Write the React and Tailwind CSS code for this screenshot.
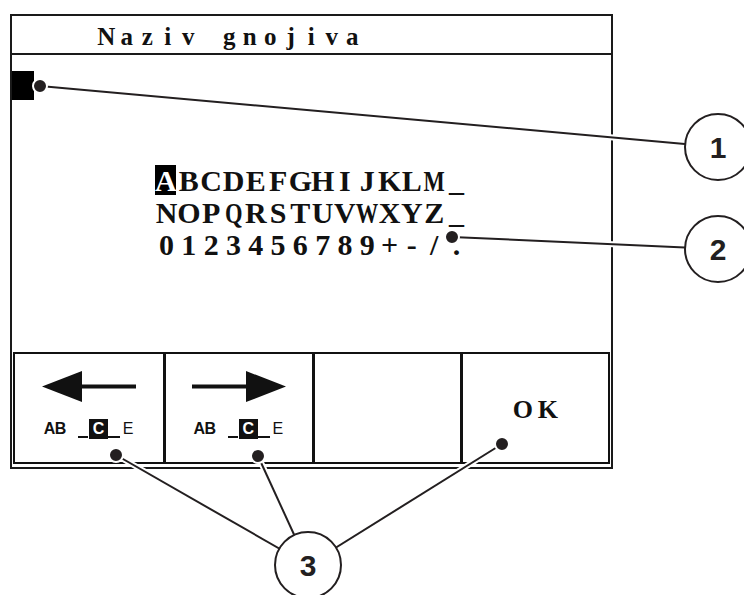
import React from 'react';

const serif = "font-['Liberation_Serif','DejaVu_Serif',serif]";
const sans = "font-['Liberation_Sans',Arial,sans-serif]";

const WIDE = 'MWQ';

// fixed-pitch row of characters, like the terminal's bitmap font
const Cells = ({ text, w }) => (
  <>
    {text.split('').map((ch, i) => (
      <span key={i} className={`inline-flex justify-center ${w}`}>
        {WIDE.includes(ch) ? <span className="inline-block scale-x-75">{ch}</span> : ch}
      </span>
    ))}
  </>
);

const ArrowLeft = () => (
  <svg width="94" height="31" viewBox="0 0 94 31">
    <polygon points="0,15.5 40,0 40,31" fill="#111" />
    <rect x="38" y="13.5" width="56" height="4" fill="#111" />
  </svg>
);

const ArrowRight = () => (
  <svg width="94" height="31" viewBox="0 0 94 31">
    <rect x="0" y="13.5" width="56" height="4" fill="#111" />
    <polygon points="94,15.5 54,0 54,31" fill="#111" />
  </svg>
);

const CursorLabel = () => (
  <div className={`${sans} flex items-end text-[16px] leading-[20px] text-[#111] h-[20px]`}>
    <span className="w-[11px] flex justify-center font-bold">A</span>
    <span className="w-[11px] flex justify-center font-bold">B</span>
    <span className="w-[10px] h-[2px] bg-[#111] ml-[12px] mb-[1px]" />
    <span className="w-[19px] h-[20px] flex justify-center bg-[#111] text-white font-bold ml-[1px]">C</span>
    <span className="w-[12px] h-[2px] bg-[#111] mb-[1px]" />
    <span className="w-[12px] flex justify-center ml-[2px]">E</span>
  </div>
);

// callout circle with number
const Callout = ({ n, className }) => (
  <div
    className={`absolute w-[68px] h-[68px] rounded-full border-2 border-[#231f20] bg-white flex items-center justify-center ${sans} font-bold text-[30px] text-[#231f20] ${className}`}
  >
    {n}
  </div>
);

const Leader = ({ x1, y1, x2, y2 }) => (
  <g>
    <line x1={x1} y1={y1} x2={x2} y2={y2} stroke="#fff" strokeWidth="6" />
    <line x1={x1} y1={y1} x2={x2} y2={y2} stroke="#231f20" strokeWidth="2" />
  </g>
);

const Dot = ({ cx, cy }) => (
  <circle cx={cx} cy={cy} r="7" fill="#231f20" stroke="#fff" strokeWidth="2" />
);

export default function App() {
  return (
    <div className="relative w-[744px] h-[595px] overflow-hidden bg-white">
      {/* display frame */}
      <div className="ml-[10px] mt-[14px] w-[603px] h-[455px] border-2 border-[#1a1a1a] flex flex-col">
        <div className={`h-[39px] border-b-2 border-[#1a1a1a] pl-[84px] pt-[4px] ${serif} font-bold text-[25px] leading-[33px] text-[#111] whitespace-pre`}>
          <Cells text="Naziv gnojiva" w="w-[20.5px]" />
        </div>

        <div className="flex-1 flex flex-col">
          <div className="mt-[16px] w-[22px] h-[29px] bg-black" />
          <div className={`${serif} font-bold text-[30px] leading-[32px] text-[#111] mt-[65px] mx-auto w-fit whitespace-pre`}>
            <div className="flex h-[32px]">
              <span className="inline-flex justify-center items-center w-[21px] mr-[1.3px] h-[30px] bg-black text-white">
                <span className="translate-y-[1px]">A</span>
              </span>
              <Cells text="BCDEFGHIJKLM_" w="w-[22.3px]" />
            </div>
            <div className="flex h-[32px]">
              <Cells text="NOPQRSTUVWXYZ_" w="w-[22.3px]" />
            </div>
            <div className="flex h-[32px]">
              <Cells text="0123456789+-/." w="w-[22.3px]" />
            </div>
          </div>
        </div>

        {/* softkeys */}
        <div className="mx-[1px] mb-[3px] h-[112px] border-2 border-[#111] grid grid-cols-4">
          <div className="flex flex-col items-center pt-[17px] gap-[17px]">
            <ArrowLeft />
            <CursorLabel />
          </div>
          <div className="border-l-[3px] border-[#111] flex flex-col items-center pt-[17px] gap-[17px]">
            <ArrowRight />
            <CursorLabel />
          </div>
          <div className="border-l-[3px] border-[#111]" />
          <div className={`border-l-[3px] border-[#111] flex items-center justify-center pt-[3px] ${serif} font-bold text-[26px] text-[#111]`}>
            <Cells text="OK" w="w-[25px]" />
          </div>
        </div>
      </div>

      {/* annotation leaders */}
      <svg className="absolute inset-0" width="744" height="595">
        <Leader x1={40} y1={86} x2={718} y2={147} />
        <Leader x1={452} y1={237} x2={718} y2={249} />
        <Leader x1={116} y1={455} x2={308} y2={565} />
        <Leader x1={258} y1={456} x2={308} y2={565} />
        <Leader x1={502} y1={444} x2={308} y2={565} />
        <Dot cx={40} cy={86} />
        <Dot cx={452} cy={237} />
        <Dot cx={116} cy={455} />
        <Dot cx={258} cy={456} />
        <Dot cx={502} cy={444} />
      </svg>

      <Callout n="1" className="left-[684px] top-[113px]" />
      <Callout n="2" className="left-[684px] top-[215px]" />
      <Callout n="3" className="left-[274px] top-[531px]" />
    </div>
  );
}
